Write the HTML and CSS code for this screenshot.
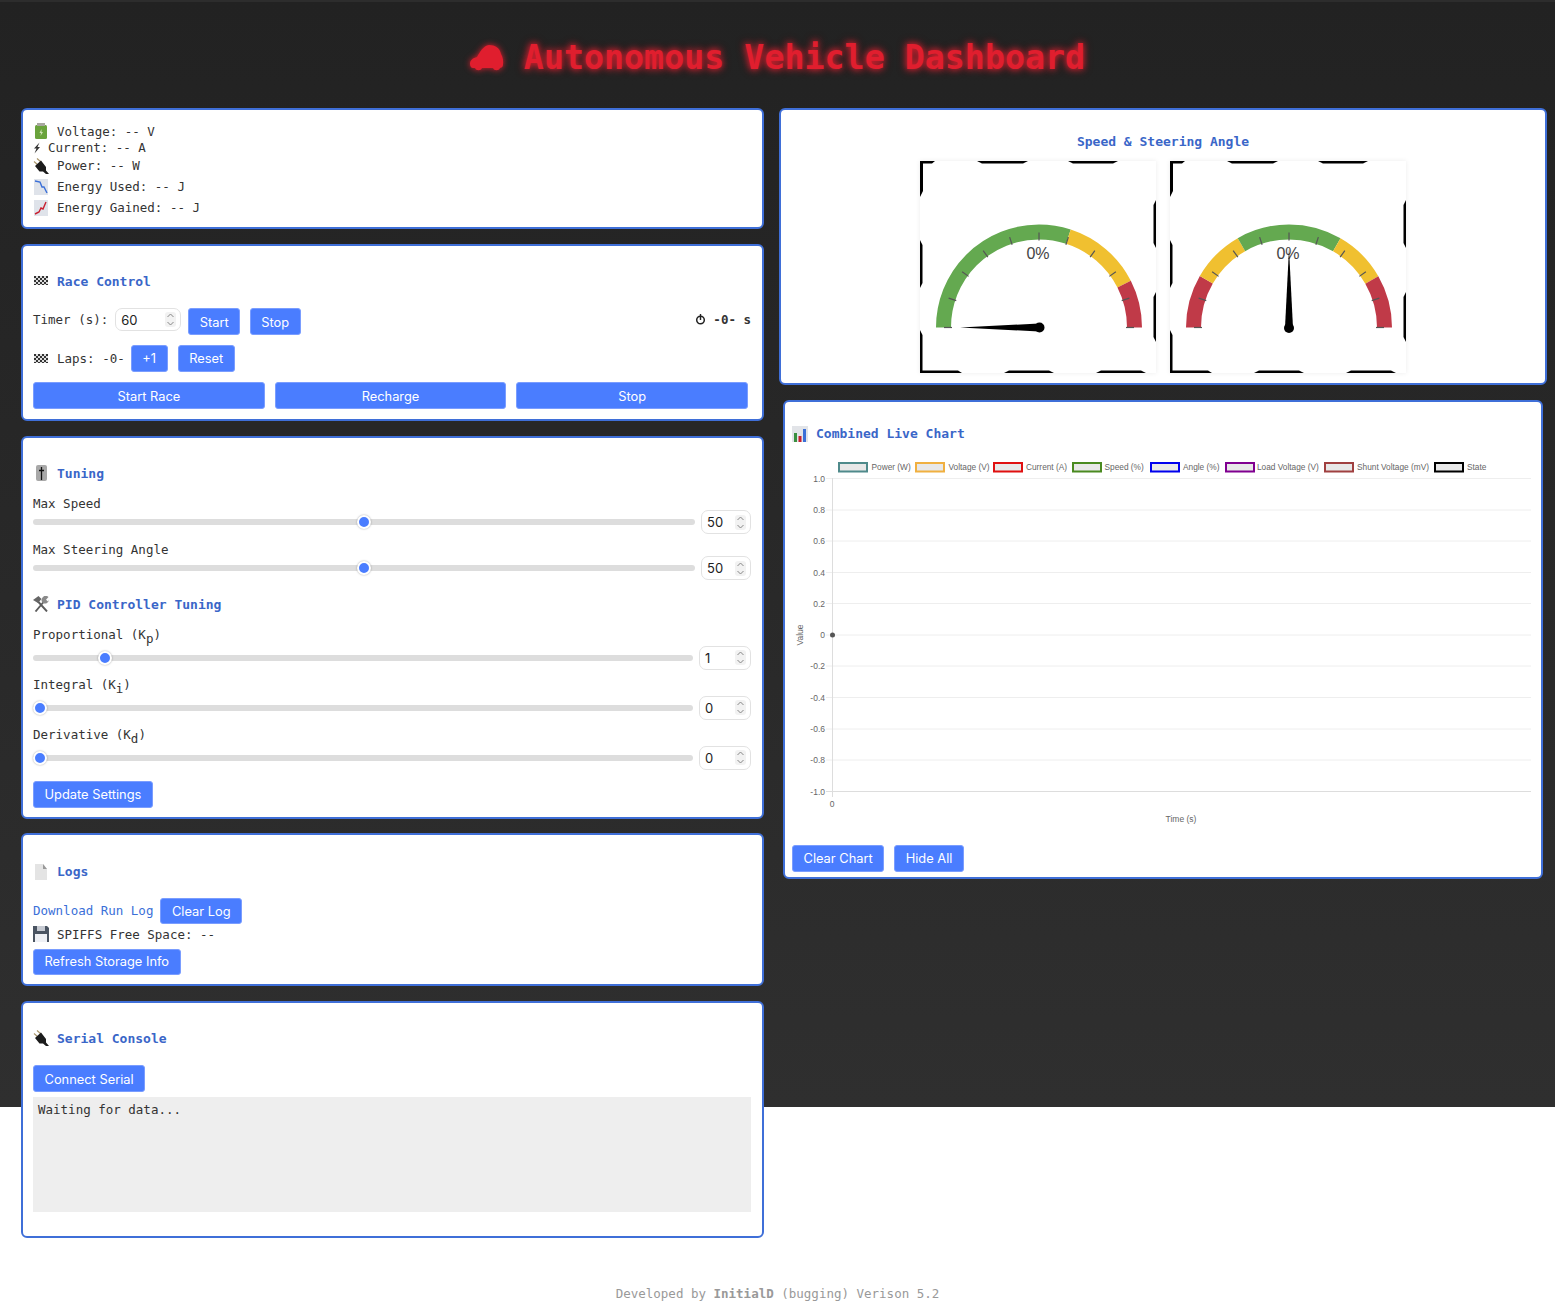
FILE: index.html
```html
<!DOCTYPE html>
<html lang="en">
<head>
  <meta charset="UTF-8">
  <title>Autonomous Vehicle Dashboard</title>
  <meta name="viewport" content="width=device-width, initial-scale=1.0">
  <link rel="stylesheet" href="styles.css">
</head>
<body>

  <!-- shared icons -->
  <svg class="defs" width="0" height="0">
    <symbol id="i-flag" viewBox="0 0 16 16">
      <rect x="1" y="3" width="14" height="9" fill="#ddd"/>
      <path d="M1 3h2v2H1zM5 3h2v2H5zM9 3h2v2H9zM13 3h2v2h-2zM3 5h2v2H3zM7 5h2v2H7zM11 5h2v2h-2zM1 7h2v2H1zM5 7h2v2H5zM9 7h2v2H9zM13 7h2v2h-2zM3 9h2v2H3zM7 9h2v2H7zM11 9h2v2h-2zM1 11h2v1H1zM5 11h2v1H5zM9 11h2v1H9zM13 11h2v1h-2z" fill="#333"/>
    </symbol>
    <symbol id="i-plug" viewBox="0 0 16 16">
      <path d="M1 3.500L5 7M4 .5L8 4" stroke="#a89468" stroke-width="1.100" fill="none"/>
      <path d="M2 8L8 2.500L13 9V12.500L16 16H13L10 13.500H6.500Z" fill="#1c1c1c"/>
    </symbol>
    <symbol id="i-tick" viewBox="0 0 236 212">
      <g stroke="#555" stroke-width="1.200">
        <line x1="24" y1="166.500" x2="32" y2="166.500"/>
        <line x1="24" y1="166.500" x2="32" y2="166.500" transform="rotate(18 119 166.500)"/>
        <line x1="24" y1="166.500" x2="32" y2="166.500" transform="rotate(36 119 166.500)"/>
        <line x1="24" y1="166.500" x2="32" y2="166.500" transform="rotate(54 119 166.500)"/>
        <line x1="24" y1="166.500" x2="32" y2="166.500" transform="rotate(72 119 166.500)"/>
        <line x1="24" y1="166.500" x2="32" y2="166.500" transform="rotate(90 119 166.500)"/>
        <line x1="24" y1="166.500" x2="32" y2="166.500" transform="rotate(108 119 166.500)"/>
        <line x1="24" y1="166.500" x2="32" y2="166.500" transform="rotate(126 119 166.500)"/>
        <line x1="24" y1="166.500" x2="32" y2="166.500" transform="rotate(144 119 166.500)"/>
        <line x1="24" y1="166.500" x2="32" y2="166.500" transform="rotate(162 119 166.500)"/>
        <line x1="24" y1="166.500" x2="32" y2="166.500" transform="rotate(180 119 166.500)"/>
      </g>
    </symbol>
    <symbol id="i-frame" viewBox="0 0 236 212">
      <path d="M0 0H15L12 2.500H3V30L0 36ZM57 0H108L103 2.500H62ZM148 0H198L193 2.500H153ZM236 39V87L233.500 82V44ZM236 131V181L233.500 176V136ZM0 79L2.500 84V122L0 127ZM0 169L2.500 174V209.500H38L42 212H0ZM84 212L89 209.500H129L134 212ZM176 212L181 209.500H221L226 212Z" fill="#000"/>
    </symbol>
  </svg>

  <div class="page">
    <h1 class="title">
      <svg class="car" width="34" height="28" viewBox="0 0 34 28">
        <path d="M0 20C0 16 3 14 7 13C10 8 13 2 19 1C25 1 30 4 31 10C33 13 33.500 17 33 21C33 23 31 24 30 24C29 27 24 27 23 24H12C11 27 6 27 5 24H3C1 24 0 22 0 20Z" fill="#e01e2e"/>
      </svg>
      <span>Autonomous Vehicle Dashboard</span>
    </h1>

    <div class="columns">
      <div class="col">

        <section class="card stats">
          <div class="stat s18">
            <svg class="icon" viewBox="0 0 16 16"><rect x="2" y="2" width="12" height="14" rx="1.500" fill="#6aa33c"/><rect x="4" y="0" width="8" height="3" fill="#a8a8a0"/><path d="M8.500 6L6.500 10H8L7.500 13L10 9H8.500Z" fill="#cfe3b5"/></svg>
            <span>Voltage: -- V</span>
          </div>
          <div class="stat s15 narrow">
            <svg class="bolt" width="8" height="12" viewBox="0 0 8 12"><path d="M6.500 .5L1 6.500H3.500L1.500 11.500L7 5H4.500Z" fill="#333"/></svg>
            <span>Current: -- A</span>
          </div>
          <div class="stat s21">
            <svg class="icon"><use href="#i-plug"/></svg>
            <span>Power: -- W</span>
          </div>
          <div class="stat">
            <svg class="icon" viewBox="0 0 16 16"><rect x="1" y="0" width="14" height="16" fill="#dfe3ea"/><path d="M2 2L7 3L9 8L11 8L14 14" stroke="#3a6fd8" stroke-width="1.400" fill="none"/></svg>
            <span>Energy Used: -- J</span>
          </div>
          <div class="stat">
            <svg class="icon" viewBox="0 0 16 16"><rect x="1" y="0" width="14" height="16" fill="#dfe3ea"/><path d="M2 14L6 12L8 8L10 9L13 2" stroke="#c82030" stroke-width="1.400" fill="none"/></svg>
            <span>Energy Gained: -- J</span>
          </div>
        </section>

        <section class="card race">
          <h3 class="head"><svg class="icon"><use href="#i-flag"/></svg>Race Control</h3>
          <div class="timer-row">
            <label>Timer (s):</label>
            <div class="num num-timer">
              <input type="number" value="60">
              <span class="spin"><svg width="9" height="15" viewBox="0 0 9 15"><path d="M1.500 5L4.500 2L7.500 5M1.500 10L4.500 13L7.500 10" stroke="#888" fill="none"/></svg></span>
            </div>
            <button class="btn">Start</button>
            <button class="btn">Stop</button>
            <strong class="clock">
              <svg width="11" height="11" viewBox="0 0 11 11"><circle cx="5.500" cy="6" r="3.800" stroke="#222" stroke-width="1.500" fill="none"/><path d="M5.500 0V6" stroke="#222" stroke-width="1.400"/></svg>
              <span>-0- s</span>
            </strong>
          </div>
          <div class="laps-row">
            <svg class="icon"><use href="#i-flag"/></svg>
            <span>Laps: -0-</span>
            <button class="btn plus">+1</button>
            <button class="btn">Reset</button>
          </div>
          <div class="triple">
            <button class="btn">Start Race</button>
            <button class="btn">Recharge</button>
            <button class="btn">Stop</button>
          </div>
        </section>

        <section class="card tuning">
          <h3 class="head">
            <svg class="icon" viewBox="0 0 16 16"><rect x="3" y="0" width="11" height="16" rx="2" fill="#a8a8a8"/><path d="M8.500 2V15" stroke="#111" stroke-width="1.300"/><path d="M6 5.500H11" stroke="#111" stroke-width="1.500"/></svg>
            Tuning
          </h3>
          <label class="lbl">Max Speed</label>
          <div class="slide">
            <input type="range" min="0" max="100" value="50">
            <div class="num">
              <input type="number" value="50">
              <span class="spin"><svg width="9" height="15" viewBox="0 0 9 15"><path d="M1.500 5L4.500 2L7.500 5M1.500 10L4.500 13L7.500 10" stroke="#888" fill="none"/></svg></span>
            </div>
          </div>
          <label class="lbl second">Max Steering Angle</label>
          <div class="slide">
            <input type="range" min="0" max="100" value="50">
            <div class="num">
              <input type="number" value="50">
              <span class="spin"><svg width="9" height="15" viewBox="0 0 9 15"><path d="M1.500 5L4.500 2L7.500 5M1.500 10L4.500 13L7.500 10" stroke="#888" fill="none"/></svg></span>
            </div>
          </div>

          <h3 class="head pid">
            <svg class="icon" viewBox="0 0 16 16"><path d="M2.500 15.500L11 5.500M14 15.500L5 5.500" stroke="#5c5c5c" stroke-width="1.900"/><path d="M0 4L5.500 0L8.500 3L5 7Z" fill="#666"/><path d="M10 7A4 4 0 0 1 15.500 1L13 3.800L15 5.500L16 3.500A4 4 0 0 1 10 7Z" fill="#8a8a8a"/></svg>
            PID Controller Tuning
          </h3>
          <label class="lbl">Proportional (K<sub>p</sub>)</label>
          <div class="slide kp">
            <input type="range" min="0" max="10" step="0.1" value="1">
            <div class="num pidnum">
              <input type="number" value="1">
              <span class="spin"><svg width="9" height="15" viewBox="0 0 9 15"><path d="M1.500 5L4.500 2L7.500 5M1.500 10L4.500 13L7.500 10" stroke="#888" fill="none"/></svg></span>
            </div>
          </div>
          <label class="lbl">Integral (K<sub>i</sub>)</label>
          <div class="slide kp">
            <input type="range" min="0" max="10" step="0.1" value="0">
            <div class="num pidnum">
              <input type="number" value="0">
              <span class="spin"><svg width="9" height="15" viewBox="0 0 9 15"><path d="M1.500 5L4.500 2L7.500 5M1.500 10L4.500 13L7.500 10" stroke="#888" fill="none"/></svg></span>
            </div>
          </div>
          <label class="lbl">Derivative (K<sub>d</sub>)</label>
          <div class="slide kp">
            <input type="range" min="0" max="10" step="0.1" value="0">
            <div class="num pidnum">
              <input type="number" value="0">
              <span class="spin"><svg width="9" height="15" viewBox="0 0 9 15"><path d="M1.500 5L4.500 2L7.500 5M1.500 10L4.500 13L7.500 10" stroke="#888" fill="none"/></svg></span>
            </div>
          </div>
          <button class="btn update">Update Settings</button>
        </section>

        <section class="card logs">
          <h3 class="head">
            <svg class="icon" viewBox="0 0 16 16"><path d="M2 0H10L14 5V16H2Z" fill="#e4e4e4"/><path d="M10 0L14 5H10Z" fill="#999"/></svg>
            Logs
          </h3>
          <div class="log-row">
            <a class="dl" href="#">Download Run Log</a>
            <button class="btn">Clear Log</button>
          </div>
          <div class="space-row">
            <svg class="icon" viewBox="0 0 16 16"><path d="M0 0H14L16 2V16H0Z" fill="#4a5462"/><rect x="2" y="8" width="12" height="8" fill="#eef0f5"/><rect x="4" y="0" width="8" height="5" fill="#c6cad2"/></svg>
            <span>SPIFFS Free Space: --</span>
          </div>
          <button class="btn">Refresh Storage Info</button>
        </section>

        <section class="card serial">
          <h3 class="head"><svg class="icon"><use href="#i-plug"/></svg>Serial Console</h3>
          <button class="btn connect">Connect Serial</button>
          <pre class="console">Waiting for data...</pre>
        </section>
      </div>

      <div class="col">
        <section class="card gauges">
          <h3 class="gauge-title">Speed &amp; Steering Angle</h3>
          <div class="gauge-row">
            <svg class="gauge" width="236" height="212" viewBox="0 0 236 212">
              <use href="#i-frame"/>
              <path d="M23.500 166.500A95.500 95.500 0 0 1 214.500 166.500" pathLength="100" fill="none" stroke-width="15" stroke="#64a950" stroke-dasharray="60 100"/>
              <path d="M23.500 166.500A95.500 95.500 0 0 1 214.500 166.500" pathLength="100" fill="none" stroke-width="15" stroke="#f0c030" stroke-dasharray="25 100" stroke-dashoffset="-60"/>
              <path d="M23.500 166.500A95.500 95.500 0 0 1 214.500 166.500" pathLength="100" fill="none" stroke-width="15" stroke="#c03a48" stroke-dasharray="15 100" stroke-dashoffset="-85"/>
              <use href="#i-tick"/>
              <text class="pct" x="118" y="98">0%</text>
              <path d="M40 166.500L119 162.500V170.500Z" fill="#000"/>
              <circle cx="119.500" cy="166.500" r="5" fill="#000"/>
            </svg>
            <svg class="gauge" width="236" height="212" viewBox="0 0 236 212">
              <use href="#i-frame"/>
              <path d="M23.500 166.500A95.500 95.500 0 0 1 214.500 166.500" pathLength="100" fill="none" stroke-width="15" stroke="#c03a48" stroke-dasharray="16.700 100"/>
              <path d="M23.500 166.500A95.500 95.500 0 0 1 214.500 166.500" pathLength="100" fill="none" stroke-width="15" stroke="#f0c030" stroke-dasharray="16.700 100" stroke-dashoffset="-16.700"/>
              <path d="M23.500 166.500A95.500 95.500 0 0 1 214.500 166.500" pathLength="100" fill="none" stroke-width="15" stroke="#64a950" stroke-dasharray="33.300 100" stroke-dashoffset="-33.400"/>
              <path d="M23.500 166.500A95.500 95.500 0 0 1 214.500 166.500" pathLength="100" fill="none" stroke-width="15" stroke="#f0c030" stroke-dasharray="16.700 100" stroke-dashoffset="-66.700"/>
              <path d="M23.500 166.500A95.500 95.500 0 0 1 214.500 166.500" pathLength="100" fill="none" stroke-width="15" stroke="#c03a48" stroke-dasharray="16.700 100" stroke-dashoffset="-83.400"/>
              <use href="#i-tick"/>
              <text class="pct" x="118" y="98">0%</text>
              <path d="M119 88L123 166.500H115Z" fill="#000"/>
              <circle cx="119" cy="167" r="5" fill="#000"/>
            </svg>
          </div>
        </section>

        <section class="card chart">
          <h3 class="head">
            <svg class="icon" viewBox="0 0 16 16"><rect width="16" height="16" fill="#e2e4e8"/><rect x="2" y="7" width="3" height="9" fill="#3a8f40"/><rect x="6.500" y="10" width="3" height="6" fill="#c82030"/><rect x="11" y="3" width="3" height="13" fill="#3a6fd8"/></svg>
            Combined Live Chart
          </h3>
          <svg class="plot" width="740" height="382" viewBox="0 0 740 382">
            <g class="legend">
              <rect x="46" y="8" width="28" height="8.500" stroke="#4f8a8b"/><text x="78.500" y="15">Power (W)</text>
              <rect x="123" y="8" width="28" height="8.500" stroke="#f0b040"/><text x="155.500" y="15">Voltage (V)</text>
              <rect x="201" y="8" width="28" height="8.500" stroke="#e01010"/><text x="233" y="15">Current (A)</text>
              <rect x="280" y="8" width="28" height="8.500" stroke="#4a8a20"/><text x="311.500" y="15">Speed (%)</text>
              <rect x="358" y="8" width="28" height="8.500" stroke="#0000ee"/><text x="390" y="15">Angle (%)</text>
              <rect x="433" y="8" width="28" height="8.500" stroke="#800090"/><text x="464" y="15">Load Voltage (V)</text>
              <rect x="532" y="8" width="28" height="8.500" stroke="#a04040"/><text x="564" y="15">Shunt Voltage (mV)</text>
              <rect x="642" y="8" width="28" height="8.500" stroke="#000"/><text x="674" y="15">State</text>
            </g>
            <g class="grid">
              <path d="M33 23.500H738M33 55H738M33 86H738M33 117.500H738M33 148.500H738M33 180H738M33 211H738M33 242.500H738M33 274H738M33 305H738"/>
              <path class="axis" d="M33 336.500H738M39.500 23V342"/>
            </g>
            <g class="ylabels">
              <text x="32" y="26.500">1.0</text>
              <text x="32" y="58">0.8</text>
              <text x="32" y="89">0.6</text>
              <text x="32" y="120.500">0.4</text>
              <text x="32" y="151.500">0.2</text>
              <text x="32" y="183">0</text>
              <text x="32" y="214">-0.2</text>
              <text x="32" y="245.500">-0.4</text>
              <text x="32" y="277">-0.6</text>
              <text x="32" y="308">-0.8</text>
              <text x="32" y="339.500">-1.0</text>
            </g>
            <circle cx="39.500" cy="180" r="2.500" fill="#555"/>
            <text class="axlabel" x="39" y="352">0</text>
            <text class="axlabel" x="388" y="367">Time (s)</text>
            <text class="axlabel" transform="translate(10 180) rotate(-90)">Value</text>
          </svg>
          <div class="chart-btns">
            <button class="btn">Clear Chart</button>
            <button class="btn">Hide All</button>
          </div>
        </section>
      </div>
    </div>
  </div>

  <footer class="foot">Developed by <b>InitialD</b> (bugging) Verison 5.2</footer>
</body>
</html>
```

FILE: styles.css
```css
html {
  background: #fff;
}
body {
  margin: 0;
  font-family: "DejaVu Sans Mono", "Liberation Mono", monospace;
  font-size: 12.5px;
  color: #333;
}
.defs {
  position: absolute;
}
.page {
  height: 1107px;
  background: linear-gradient(#222, #2f2f2f);
  border-top: 2px solid #2d2d2d;
  box-sizing: border-box;
}
.title {
  display: flex;
  justify-content: center;
  align-items: center;
  gap: 20px;
  height: 105.5px;
  margin: 0;
  padding-top: 6px;
  box-sizing: border-box;
  font-size: 33.3px;
  font-weight: bold;
  color: #e01e2e;
  text-shadow: 0 0 6px #e01e2e, 0 0 10px rgba(224, 30, 46, 0.6);
}
.car {
  filter: drop-shadow(0 0 3px #e01e2e);
}
.columns {
  display: grid;
  grid-template-columns: 743px 768px;
  gap: 15px;
  padding: 0 21px;
}
.col {
  display: flex;
  flex-direction: column;
  gap: 14.5px;
}
.card {
  background: #fff;
  border: 2px solid #3f6fd8;
  border-radius: 6px;
  padding: 12px 11px 12px 10px;
  box-sizing: border-box;
}
.icon {
  width: 16px;
  height: 16px;
  flex: none;
}
.head {
  display: flex;
  align-items: center;
  gap: 8px;
  margin: 15.5px 0 0;
  height: 16px;
  font-size: 13px;
  font-weight: bold;
  color: #3a66c8;
}

/* buttons */
.btn {
  height: 27px;
  padding: 0 10.5px;
  border: 1px solid #7a9dff;
  border-radius: 3px;
  background: #4a7dff;
  color: #fff;
  font-family: Inter, "Liberation Sans", sans-serif;
  font-size: 12.85px;
}
.timer-row .btn,
.triple .btn,
.log-row .btn,
.connect {
  padding-top: 1px;
}

/* number inputs */
.num {
  display: flex;
  align-items: center;
  width: 50px;
  height: 24px;
  padding: 0 4px 0 5px;
  border: 1px solid #e2e2e2;
  border-radius: 7px;
  box-sizing: border-box;
  flex: none;
}
.num input {
  width: 100%;
  min-width: 0;
  padding: 0;
  border: 0;
  outline: 0;
  background: none;
  font-family: Inter, "Liberation Sans", sans-serif;
  font-size: 13px;
  color: #222;
  -moz-appearance: textfield;
}
.num input::-webkit-inner-spin-button {
  display: none;
}
.spin {
  display: flex;
  flex: none;
  width: 11px;
  justify-content: center;
  background: #f2f2f2;
  border-radius: 3px;
}
.num-timer {
  width: 66px;
  height: 23px;
}
.pidnum {
  width: 52px;
}

/* stats */
.stats {
  height: 121.5px;
  padding-top: 12.5px;
}
.stat {
  display: flex;
  align-items: center;
  gap: 8px;
  height: 21px;
}
.s18 {
  height: 18px;
}
.s15 {
  height: 15px;
}
.s21 {
  height: 21px;
}
.narrow {
  gap: 7px;
}
.bolt {
  flex: none;
}

/* race control */
.race {
  height: 177.5px;
}
.timer-row {
  display: flex;
  align-items: flex-start;
  margin-top: 19px;
  height: 27px;
  line-height: 23px;
}
.timer-row label {
  margin-right: 7px;
}
.timer-row .btn {
  margin-left: 7px;
}
.timer-row .btn + .btn {
  margin-left: 9.5px;
}
.clock {
  margin-left: auto;
  display: flex;
  align-items: center;
  gap: 7px;
}
.laps-row {
  display: flex;
  align-items: center;
  gap: 8px;
  margin-top: 10px;
}
.laps-row .btn {
  margin-left: -2px;
}
.laps-row .btn + .btn {
  margin-left: 2px;
}
.plus {
  width: 37px;
  padding: 0;
}
.triple {
  display: grid;
  grid-template-columns: repeat(3, 1fr);
  gap: 10px;
  margin-top: 10px;
  padding-right: 3px;
}

/* tuning */
.tuning {
  height: 383px;
}
.lbl {
  display: block;
  height: 16px;
  line-height: 16px;
  margin-top: 15px;
}
.lbl.second {
  margin-top: 8px;
}
.lbl sub {
  font-size: 12.5px;
  line-height: 0;
}
.slide {
  display: flex;
  align-items: center;
  gap: 6px;
  height: 24px;
  margin-top: -2px;
}
.slide.kp {
  margin-top: 2.5px;
}
.kp + .lbl {
  margin-top: 7.5px;
}
.pid {
  margin-top: 16px;
}
input[type=range] {
  -webkit-appearance: none;
  appearance: none;
  flex: 1;
  min-width: 0;
  height: 6px;
  margin: 0;
  border-radius: 3px;
  background: #ddd;
}
input[type=range]::-webkit-slider-thumb {
  -webkit-appearance: none;
  width: 14px;
  height: 14px;
  border: 2px solid #fff;
  border-radius: 50%;
  background: #4a7dff;
  box-sizing: border-box;
  box-shadow: 0 0 2px rgba(0, 0, 0, 0.35);
}
.update {
  display: block;
  margin-top: 11px;
}

/* logs */
.logs {
  height: 153px;
}
.logs .head {
  margin-top: 16.5px;
}
.log-row {
  display: flex;
  align-items: center;
  gap: 7px;
  margin-top: 18px;
}
.dl {
  color: #3a6fd8;
  text-decoration: none;
}
.log-row .btn,
.logs > .btn {
  height: 26px;
}
.space-row {
  display: flex;
  align-items: center;
  gap: 8px;
  height: 18px;
  margin: 1.5px 0 5.5px;
}

/* serial */
.serial {
  height: 237px;
}
.connect {
  display: block;
  margin-top: 19px;
}
.console {
  height: 115px;
  margin: 5px 0 0;
  padding: 5px;
  background: #eee;
  font-family: inherit;
  font-size: 12.5px;
  box-sizing: border-box;
}

/* gauges */
.gauges {
  height: 277.5px;
  margin-bottom: 0.5px;
  padding: 0 12px;
}
.gauge-title {
  margin: 24.5px 0 0;
  height: 16px;
  font-size: 13px;
  font-weight: bold;
  color: #3a66c8;
  text-align: center;
}
.gauge-row {
  display: flex;
  justify-content: center;
  gap: 14px;
  margin-top: 11px;
}
.gauge {
  box-shadow: 0 0 5px rgba(0, 0, 0, 0.08);
}
.pct {
  font-family: "Liberation Sans", Arial, sans-serif;
  font-size: 16px;
  fill: #444;
  text-anchor: middle;
}

/* chart */
.chart {
  height: 478.5px;
  margin: 0 4px;
  padding: 12px 6px 12px 7px;
}
.chart .head {
  margin-top: 11.5px;
}
.plot {
  display: block;
  margin: 13.5px 0 0 1px;
  font-family: "Liberation Sans", Arial, sans-serif;
}
.legend rect {
  fill: #e8e8e8;
  stroke-width: 2;
}
.legend text {
  font-size: 8.300px;
  fill: #666;
}
.grid path {
  stroke: #eee;
  fill: none;
}
.grid .axis {
  stroke: #ddd;
}
.ylabels text {
  font-size: 8.500px;
  fill: #666;
  text-anchor: end;
}
.axlabel {
  font-size: 8.500px;
  fill: #666;
  text-anchor: middle;
}
.chart-btns {
  display: flex;
  gap: 10px;
  margin-top: 8px;
}

.foot {
  margin-top: 179px;
  padding-bottom: 12px;
  text-align: center;
  color: #999;
  line-height: 15px;
}
```
